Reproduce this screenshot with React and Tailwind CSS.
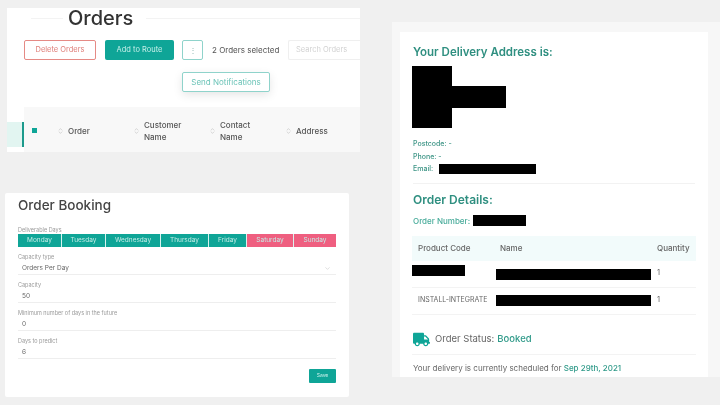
import React from 'react';
import { FaTruck } from 'react-icons/fa';
import { ChevronDown, ChevronsUpDown } from 'lucide-react';

const days = [
    { name: 'Monday', w: 'w-[44px]', bg: 'bg-[#0fa597]' },
    { name: 'Tuesday', w: 'w-[44px]', bg: 'bg-[#0fa597]' },
    { name: 'Wednesday', w: 'w-[55px]', bg: 'bg-[#0fa597]' },
    { name: 'Thursday', w: 'w-[48px]', bg: 'bg-[#0fa597]' },
    { name: 'Friday', w: 'w-[38px]', bg: 'bg-[#0fa597]' },
    { name: 'Saturday', w: 'w-[47px]', bg: 'bg-[#ef5f80]' },
    { name: 'Sunday', w: 'w-[42px]', bg: 'bg-[#ef5f80]' },
];

const fields = [
    { label: 'Capacity type', value: 'Orders Per Day', select: true },
    { label: 'Capacity', value: '50' },
    { label: 'Minimum number of days in the future', value: '0' },
    { label: 'Days to predict', value: '6' },
];

// Sort arrows for the table head
const SortIcon = () => <ChevronsUpDown className="h-[10px] w-[7px] shrink-0 text-[#a9a9a9]" strokeWidth={1.5} />;

const HeadCell = ({ w, children }) => (
    <div className={`flex items-center gap-[4px] text-[8px] leading-[12px] font-medium text-[#555] ${w}`}>
        <SortIcon />
        <span>{children}</span>
    </div>
);

const OrdersPanel = () => (
    <div className="relative ml-[7px] mt-[8px] h-[144px] w-[353px] bg-white">
        <div className="flex items-center h-[21px]">
            <div className="ml-[24px] h-px w-[32px] bg-[#f3f3f3]"></div>
            <h1 className="ml-[5px] text-[20px] leading-[21px] font-medium text-[#333]">Orders</h1>
            <div className="ml-[13px] h-px flex-1 bg-[#f3f3f3]"></div>
        </div>
        <div className="ml-[17px] mt-[11px] flex items-center h-[20px]">
            <button className="h-[20px] w-[72px] rounded-[2px] border border-[#e58a85] text-[7.5px] text-[#df7f79]">Delete Orders</button>
            <button className="ml-[9px] h-[20px] w-[69px] rounded-[2px] bg-[#0fa597] text-[7.5px] text-[#c8f0ea]">Add to Route</button>
            <button className="ml-[8px] h-[20px] w-[21px] rounded-[2px] border border-[#8fd3cb] text-[8px] leading-none text-[#8fb8b3]">⋮</button>
            <span className="ml-[9px] w-[76px] text-[8px] whitespace-nowrap text-[#555]">2 Orders selected</span>
            <div className="flex h-[20px] flex-1 items-center rounded-l-[2px] border border-r-0 border-[#efefef] pl-[7px] text-[7.5px] text-[#d2d2d2]">Search Orders</div>
        </div>
        <div className="absolute left-[175px] top-[64px] flex h-[20px] w-[88px] items-center justify-center rounded-[2px] border border-[#8fd3cb] bg-white text-[8px] text-[#6cc4b8] shadow-[0_3px_10px_rgba(0,0,0,0.10)]">Send Notifications</div>
        <div className="mt-[47px] flex h-[45px]">
            <div className="mt-[15px] h-[25px] w-[15px] bg-[#e2f5f1]"></div>
            <div className="mt-[15px] h-[25px] w-[2px] bg-[#1c9a8c]"></div>
            <div className="flex flex-1 items-center bg-[#f8f8f8] pt-[2px]">
                <div className="ml-[8px] h-[5px] w-[5px] bg-[#0fa597]"></div>
                <div className="ml-[20px] flex items-center">
                    <HeadCell w="w-[76px]">Order</HeadCell>
                    <HeadCell w="w-[76px]">Customer<br />Name</HeadCell>
                    <HeadCell w="w-[76px]">Contact<br />Name</HeadCell>
                    <HeadCell w="w-[60px]">Address</HeadCell>
                </div>
            </div>
        </div>
    </div>
);

const BookingPanel = () => (
    <div className="ml-[5px] mt-[41px] h-[204px] w-[344px] rounded-[2px] bg-white px-[13px] pt-[4px]">
        <h2 className="text-[13.5px] leading-[16px] font-medium text-[#444]">Order Booking</h2>
        <p className="mt-[13px] text-[5.5px] leading-[8px] text-[#9a9a9a]">Deliverable Days</p>
        <div className="flex h-[13px]">
            {days.map(day => (
                <div key={day.name} className={`flex items-center justify-center border-r border-[#d8f3ef] text-[6.5px] text-[#c5ece6] last:border-r-0 ${day.w} ${day.bg}`}>
                    {day.name}
                </div>
            ))}
        </div>
        <div className="mt-[7px] w-[318px]">
            {fields.map(field => (
                <div key={field.label} className="mb-[7px] h-[21px] border-b border-[#eeeeee]">
                    <p className="text-[5.5px] leading-[7px] text-[#9a9a9a]">{field.label}</p>
                    <div className="mt-[1px] flex items-center justify-between pl-[4px] pr-[5px] text-[6.5px] leading-[12px] text-[#666]">
                        <span>{field.value}</span>
                        {field.select && <ChevronDown className="h-[7px] w-[7px] text-[#c9c9c9]" />}
                    </div>
                </div>
            ))}
        </div>
        <div className="mt-[10px] flex w-[318px] justify-end">
            <button className="h-[14px] w-[27px] rounded-[1px] bg-[#0fa597] text-[5px] text-[#c8f0ea]">Save</button>
        </div>
    </div>
);

const ProductRow = ({ code, codeBlock }) => (
    <div className="flex h-[27px] border-b border-[#f3f3f3] text-[7.5px] text-[#666]">
        <div className="flex w-[84px] items-center">
            {codeBlock
                ? <div className="-mt-[6px] h-[11px] w-[53px] bg-black"></div>
                : <span className="pl-[6px] text-[7px] whitespace-nowrap">{code}</span>}
        </div>
        <div className={codeBlock ? 'flex w-[161px] items-center pt-[2px]' : 'flex w-[161px] items-center'}>
            <div className="h-[11px] w-[155px] bg-black"></div>
        </div>
        <span className="flex items-center pb-[1px]">1</span>
    </div>
);

const DeliveryPanel = () => (
    <div className="ml-[32px] mt-[22px] h-[355px] w-[328px] bg-[#f7f7f7] pl-[8px] pr-[12px] pt-[10px]">
        <div className="h-[345px] bg-white pl-[12px] pr-[12px] overflow-hidden">
            <h2 className="mt-[12px] pl-[1px] text-[11.5px] leading-[16px] font-semibold text-[#2f8f80]">Your Delivery Address is:</h2>
            <div className="mt-[6px] flex">
                <div className="h-[62px] w-[40px] bg-black"></div>
                <div className="mt-[20px] h-[22px] w-[54px] bg-black"></div>
            </div>
            <div className="mt-[10px] pl-[1px] text-[7px] font-medium leading-[12.5px] text-[#3c9485]">
                <p>Postcode: -</p>
                <p>Phone: -</p>
                <div className="flex items-center">
                    <span>Email:</span>
                    <div className="ml-[6px] h-[10px] w-[97px] bg-black"></div>
                </div>
            </div>
            <div className="mx-[1px] mt-[7px] h-px bg-[#f2f2f2]"></div>
            <h2 className="mt-[8px] pl-[1px] text-[12px] leading-[16px] font-semibold text-[#2f8f80]">Order Details:</h2>
            <div className="mt-[7px] flex items-center pl-[1px] text-[8px] font-medium text-[#47ab9a]">
                <span className="w-[60px]">Order Number:</span>
                <div className="h-[11px] w-[53px] bg-black"></div>
            </div>
            <div className="mt-[9px] flex h-[25px] items-center bg-[#f2fbfb] text-[8px] font-medium text-[#666]">
                <span className="w-[88px] pl-[6px]">Product Code</span>
                <span className="w-[157px]">Name</span>
                <span>Quantity</span>
            </div>
            <ProductRow codeBlock />
            <ProductRow code="INSTALL-INTEGRATE" />
            <div className="mt-[16px] flex h-[17px] items-center pl-[1px]">
                <FaTruck className="h-[15px] w-[17px] text-[#0fa597]" />
                <span className="ml-[5px] text-[9.5px] text-[#666]">Order Status:</span>
                <span className="ml-[3px] text-[9.5px] font-medium text-[#2f9a89]">Booked</span>
            </div>
            <div className="mt-[6px] h-px bg-[#f3f3f3]"></div>
            <p className="mt-[8px] pl-[1px] text-[8px] leading-[10px] text-[#666]">
                Your delivery is currently scheduled for <span className="font-medium text-[#2f9a89]">Sep 29th, 2021</span>
            </p>
        </div>
    </div>
);

export default function App() {
    return (
        <div className="flex h-[405px] w-[720px] overflow-hidden bg-[#f0f0f0] font-['Inter','Liberation_Sans',sans-serif] blur-[0.4px]">
            <div className="w-[360px] shrink-0">
                <OrdersPanel />
                <BookingPanel />
            </div>
            <DeliveryPanel />
        </div>
    );
}
